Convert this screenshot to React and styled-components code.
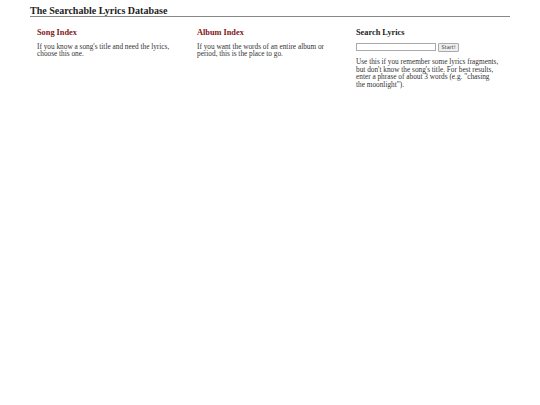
import styled, { createGlobalStyle } from 'styled-components'

const Global = createGlobalStyle`
    body {
        margin: 0;
        background: #fff;
        font-family: "Liberation Serif", "Times New Roman", serif;
        color: #222;
    }
`

const Page = styled.div`
    width: 480px;
    padding: 5px 0 0 30px;
`

const Title = styled.h1`
    margin: 0;
    font-size: 10px;
    font-weight: bold;
    line-height: 11px;
    color: #222;
    border-bottom: 1px solid #888;
`

const Columns = styled.div`
    display: grid;
    grid-template-columns: 160px 160px 160px;
    padding-top: 11px;
`

const Col = styled.div`
    padding: ${p => (p.$last ? '0 10px 0 6px' : '0 9px 0 7px')};
`

const Heading = styled.h2`
    margin: 0 0 4.5px;
    font-size: 8.3px;
    line-height: 10px;
    font-weight: bold;
    color: ${p => (p.$plain ? '#222' : '#801818')};
`

const Text = styled.p`
    margin: 0;
    font-size: 7.3px;
    line-height: 7.6px;
    color: #333;
`

const SearchRow = styled.form`
    display: flex;
    align-items: center;
    gap: 2px;
    height: 9px;
    margin-bottom: 6.7px;
`

const Input = styled.input`
    width: 80px;
    height: 8px;
    box-sizing: border-box;
    border: 1px solid #aaa;
    padding: 0;
`

const Button = styled.button`
    height: 9px;
    padding: 0 2.5px;
    font-size: 5px;
    font-family: "DejaVu Sans", sans-serif;
    background: #eee;
    border: 1px solid #aaa;
    border-radius: 1px;
    color: #333;
`

export default function App() {
    return (
        <Page>
            <Global />
            <Title>The Searchable Lyrics Database</Title>
            <Columns>
                <Col>
                    <Heading>Song Index</Heading>
                    <Text>If you know a song's title and need the lyrics, choose this one.</Text>
                </Col>
                <Col>
                    <Heading>Album Index</Heading>
                    <Text>If you want the words of an entire album or period, this is the place to go.</Text>
                </Col>
                <Col $last>
                    <Heading $plain>Search Lyrics</Heading>
                    <SearchRow onSubmit={e => e.preventDefault()}>
                        <Input type='text' />
                        <Button type='submit'>Start!</Button>
                    </SearchRow>
                    <Text>Use this if you remember some lyrics fragments, but don't know the song's title. For best results, enter a phrase of about 3 words (e.g. "chasing the moonlight").</Text>
                </Col>
            </Columns>
        </Page>
    )
}
